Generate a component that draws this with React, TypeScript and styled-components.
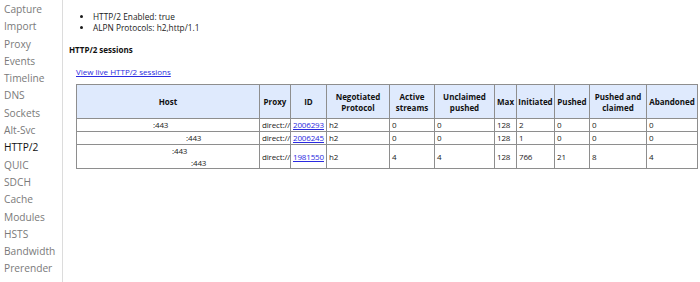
import React from "react";
import styled, { createGlobalStyle } from "styled-components";

const Global = createGlobalStyle`
  html, body { margin: 0; padding: 0; background: #fff; }
  body { font-family: "Open Sans", "Noto Sans", sans-serif; color: #1a1a1a; }
`;

const Page = styled.div`
  display: flex;
  width: 700px;
  height: 282px;
  overflow: hidden;
`;

const Sidebar = styled.nav`
  width: 62px;
  flex: none;
  border-right: 1px solid #dcdcdc;
  display: flex;
  flex-direction: column;
  padding-top: 1px;
`;

const NavItem = styled.div<{ $active?: boolean }>`
  padding-left: 4px;
  font-size: 10.2px;
  line-height: 17.3px;
  color: ${(p) => (p.$active ? "#111" : "#7a7a7a")};
  white-space: nowrap;
`;

const Content = styled.main`
  flex: 1;
  padding-left: 6px;
  font-size: 8px;
`;

const Bullets = styled.ul`
  margin: 11px 0 0 0;
  padding-left: 24px;
  line-height: 11px;
  font-size: 8.3px;
`;

const Heading = styled.h4`
  margin: 11px 0 0 0;
  font-size: 8px;
  font-weight: 700;
  line-height: 12px;
  color: #111;
`;

const Indented = styled.div`
  margin-left: 7px;
`;

const LiveLink = styled.a`
  display: block;
  margin-top: 10px;
  line-height: 12px;
  color: #2a2ae0;
  text-decoration: underline;
`;

const Table = styled.table`
  margin-top: 6px;
  border-collapse: collapse;
  table-layout: fixed;
  width: 621px;
  font-size: 8px;
`;

const Th = styled.th`
  background: #dfeafd;
  border: 1px solid #8e8e8e;
  font-weight: 700;
  text-align: center;
  vertical-align: middle;
  padding: 5px 1px;
  line-height: 11px;
  height: 23px;
  color: #111;
`;

const Td = styled.td`
  border: 1px solid #8e8e8e;
  padding: 0 2px;
  line-height: 12px;
  text-align: left;
  vertical-align: middle;
  white-space: nowrap;
  letter-spacing: -0.15px;
`;

const HostLine = styled.div<{ $indent: number }>`
  padding-left: ${(p) => p.$indent}px;
  line-height: 11.5px;
`;

const IdLink = styled.a`
  color: #2a2ae0;
  text-decoration: underline;
`;

const navItems = [
  "Capture", "Import", "Proxy", "Events", "Timeline", "DNS", "Sockets", "Alt-Svc",
  "HTTP/2", "QUIC", "SDCH", "Cache", "Modules", "HSTS", "Bandwidth", "Prerender",
];

const cols = [183, 31, 36, 63, 45, 60, 22, 38, 35, 57, 51];
const headers = [
  "Host", "Proxy", "ID", "Negotiated Protocol", "Active streams", "Unclaimed pushed",
  "Max", "Initiated", "Pushed", "Pushed and claimed", "Abandoned",
];

type Row = {
  hosts: number[];
  id: string;
  vals: string[];
};

const rows: Row[] = [
  { hosts: [74], id: "2006293", vals: ["0", "0", "128", "2", "0", "0", "0"] },
  { hosts: [107], id: "2006245", vals: ["0", "0", "128", "1", "0", "0", "0"] },
  { hosts: [93, 112], id: "1981550", vals: ["4", "4", "128", "766", "21", "8", "4"] },
];

export default function App() {
  return (
    <>
      <Global />
      <Page>
        <Sidebar>
          {navItems.map((n) => (
            <NavItem key={n} $active={n === "HTTP/2"}>{n}</NavItem>
          ))}
        </Sidebar>
        <Content>
          <Bullets>
            <li>HTTP/2 Enabled: true</li>
            <li>ALPN Protocols: h2,http/1.1</li>
          </Bullets>
          <Heading>HTTP/2 sessions</Heading>
          <Indented>
            <LiveLink href="#">View live HTTP/2 sessions</LiveLink>
            <Table>
              <colgroup>
                {cols.map((w, i) => <col key={i} style={{ width: w }} />)}
              </colgroup>
              <thead>
                <tr>
                  {headers.map((h) => <Th key={h}>{h}</Th>)}
                </tr>
              </thead>
              <tbody>
                {rows.map((r) => (
                  <tr key={r.id}>
                    <Td>
                      {r.hosts.map((ind, i) => (
                        <HostLine key={i} $indent={ind}>:443</HostLine>
                      ))}
                    </Td>
                    <Td>direct://</Td>
                    <Td><IdLink href="#">{r.id}</IdLink></Td>
                    <Td>h2</Td>
                    {r.vals.map((v, i) => <Td key={i}>{v}</Td>)}
                  </tr>
                ))}
              </tbody>
            </Table>
          </Indented>
        </Content>
      </Page>
    </>
  );
}
